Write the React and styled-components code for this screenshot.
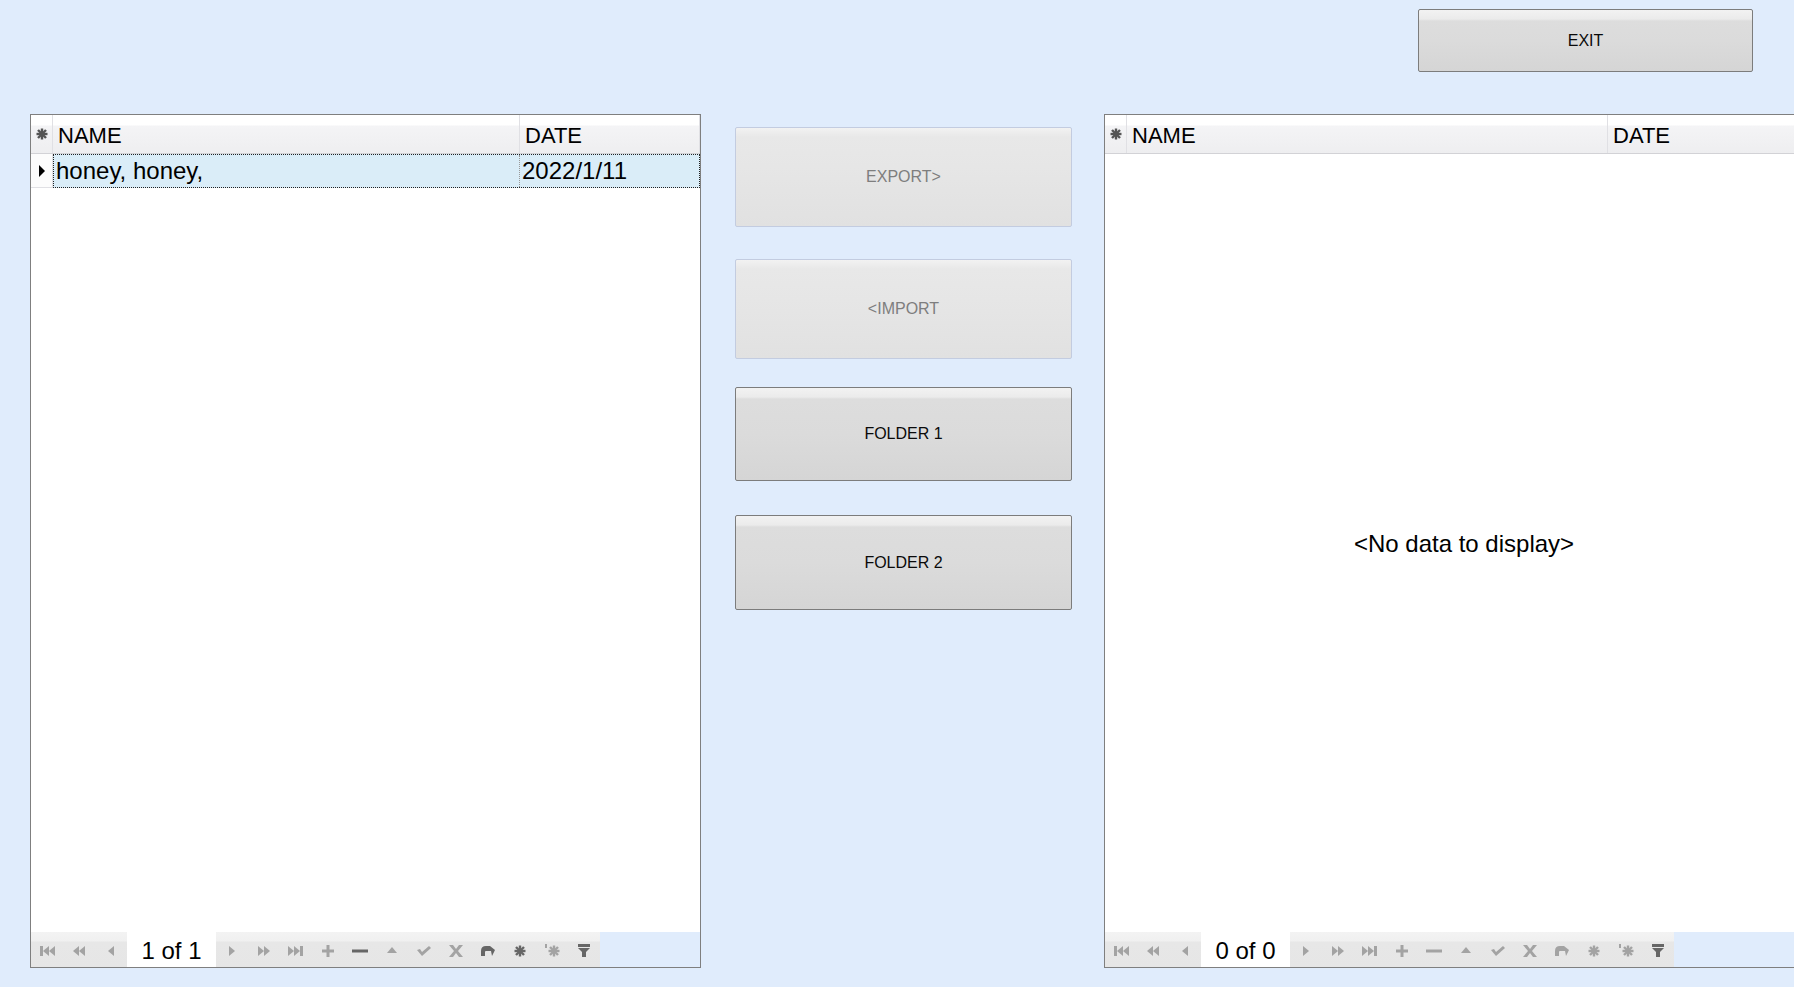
import React from 'react';
import styled, { createGlobalStyle } from 'styled-components';

const GlobalStyle = createGlobalStyle`
  html, body {
    margin: 0;
    padding: 0;
    background: #e0ecfc;
    overflow: hidden;
  }
  body {
    font-family: "Liberation Sans", Arial, sans-serif;
  }
`;

const Page = styled.div`
  width: 1794px;
  height: 987px;
  display: flex;
  flex-direction: column;
  overflow: hidden;
`;

const TopBar = styled.div`
  display: flex;
  justify-content: flex-end;
  padding: 9px 41px 0 0;
  margin-bottom: 42px;
`;

const Main = styled.div`
  display: flex;
  align-items: flex-start;
  padding-left: 30px;
`;

const ActionColumn = styled.div`
  display: flex;
  flex-direction: column;
  flex-shrink: 0;
  width: 337px;
  margin: 0 32px 0 34px;
  padding-top: 13px;
`;

const Button = styled.button`
  box-sizing: border-box;
  width: ${p => p.$w || 337}px;
  height: ${p => p.$h}px;
  margin-top: ${p => p.$mt || 0}px;
  border-radius: 2px;
  font-family: "Liberation Sans", Arial, sans-serif;
  font-size: 16px;
  padding: 0;
  cursor: default;
  border: 1px solid ${p => (p.disabled ? '#c3cce0' : '#7c7c7c')};
  color: ${p => (p.disabled ? '#7e7e7e' : '#0a0a0a')};
  background: ${p =>
    p.disabled
      ? 'linear-gradient(#f2f2f2 0, #e8e8e8 9px, #e6e6e6 40%, #e1e1e1 100%)'
      : 'linear-gradient(#f2f2f2 0, #ebebeb 9px, #dddddd 11px, #dbdbdb 50%, #d5d5d5 100%)'};
`;

const GridBox = styled.div`
  box-sizing: border-box;
  flex-shrink: 0;
  width: ${p => p.$w}px;
  height: 854px;
  border: 1px solid #7f7f7f;
  background: #fff;
  display: flex;
  flex-direction: column;
  font-size: 24px;
  color: #000;
`;

const HeaderRow = styled.div`
  display: flex;
  height: 38px;
  border-bottom: 1px solid #d2d2d6;
  background: linear-gradient(#ffffff 0, #ffffff 10px, #f4f4f6 11px, #eeeef0 100%);
  font-size: 22px;
`;

const HeaderCell = styled.div`
  box-sizing: border-box;
  width: ${p => (p.$w ? `${p.$w}px` : 'auto')};
  flex: ${p => (p.$w ? '0 0 auto' : '1')};
  border-right: 1px solid #e0e0e4;
  display: flex;
  align-items: center;
  justify-content: ${p => (p.$center ? 'center' : 'flex-start')};
  padding-left: ${p => (p.$center ? 0 : 5)}px;
  padding-top: ${p => (p.$center ? 0 : 4)}px;
  overflow: hidden;
  white-space: nowrap;
  color: ${p => (p.$center ? '#555' : '#000')};
`;

const DataRow = styled.div`
  display: flex;
  height: 34px;
`;

const Indicator = styled.div`
  box-sizing: border-box;
  width: ${p => p.$w}px;
  flex-shrink: 0;
  border-right: 1px solid #e0e0e4;
  border-bottom: 1px solid #e0e0e4;
  display: flex;
  align-items: center;
  justify-content: center;
  background: #fcfcfc;
`;

const FocusCells = styled.div`
  flex: 1;
  display: flex;
  border: 1px dotted #222;
  background: #daedf8;
`;

const Cell = styled.div`
  box-sizing: border-box;
  width: ${p => (p.$w ? `${p.$w}px` : 'auto')};
  flex: ${p => (p.$w ? '0 0 auto' : '1')};
  border-right: ${p => (p.$w ? '1px dotted #999' : 'none')};
  display: flex;
  align-items: center;
  padding-left: 2px;
  white-space: nowrap;
`;

const Body = styled.div`
  flex: 1;
  display: flex;
  flex-direction: column;
`;

const Empty = styled.div`
  flex: 1;
  display: flex;
  align-items: center;
  justify-content: center;
  padding-top: 2px;
`;

const Footer = styled.div`
  display: flex;
  height: 35px;
  background: #e0ecfc;
`;

const Navigator = styled.div`
  display: flex;
  height: 100%;
  background: linear-gradient(#f3f3f3 0, #f0f0f0 9px, #e7e7e7 10px, #e6e6e6 100%);
`;

const NavButton = styled.div`
  width: 32px;
  height: 100%;
  display: flex;
  align-items: center;
  justify-content: center;
  padding-top: 2px;
  box-sizing: border-box;
  color: ${p => (p.$dark ? '#666' : '#a3a3a3')};
`;

const PageText = styled.div`
  width: 89px;
  height: 100%;
  background: #fff;
  display: flex;
  align-items: center;
  justify-content: center;
  padding-top: 3px;
  box-sizing: border-box;
`;

const Icon = ({ children, w = 16, h = 12 }) => (
  <svg width={w} height={h} viewBox={`0 0 ${w} ${h}`} fill="currentColor">
    {children}
  </svg>
);

const Star = ({ size = 12, sw = 2 }) => (
  <svg width={size} height={size} viewBox="0 0 12 12" stroke="currentColor" strokeWidth={sw} fill="none">
    <line x1="6" y1="0.5" x2="6" y2="11.5" />
    <line x1="0.5" y1="6" x2="11.5" y2="6" />
    <line x1="2" y1="2" x2="10" y2="10" />
    <line x1="10" y1="2" x2="2" y2="10" />
  </svg>
);

const icons = {
  first: (
    <Icon>
      <rect x="1" y="1" width="3" height="10" />
      <polygon points="10,1 4,6 10,11" />
      <polygon points="16,1 10,6 16,11" />
    </Icon>
  ),
  prevPage: (
    <Icon>
      <polygon points="8,1 2,6 8,11" />
      <polygon points="14,1 8,6 14,11" />
    </Icon>
  ),
  prev: (
    <Icon>
      <polygon points="11,1 5,6 11,11" />
    </Icon>
  ),
  next: (
    <Icon>
      <polygon points="5,1 11,6 5,11" />
    </Icon>
  ),
  nextPage: (
    <Icon>
      <polygon points="2,1 8,6 2,11" />
      <polygon points="8,1 14,6 8,11" />
    </Icon>
  ),
  last: (
    <Icon>
      <polygon points="0,1 6,6 0,11" />
      <polygon points="6,1 12,6 6,11" />
      <rect x="12" y="1" width="3" height="10" />
    </Icon>
  ),
  append: (
    <Icon>
      <rect x="2" y="4.5" width="12" height="3" />
      <rect x="6.5" y="0" width="3" height="12" />
    </Icon>
  ),
  remove: (
    <Icon>
      <rect x="0" y="4.5" width="16" height="3" />
    </Icon>
  ),
  edit: (
    <Icon>
      <polygon points="8,2 13,8 3,8" />
    </Icon>
  ),
  endEdit: (
    <Icon>
      <polygon points="1,5 4,4 6,7 13,1 15,3 6,11" />
    </Icon>
  ),
  cancel: (
    <Icon>
      <polygon points="1,0 5,0 8,4 11,0 15,0 10,6 15,12 11,12 8,8 5,12 1,12 6,6" />
    </Icon>
  ),
  refresh: (
    <Icon>
      <path d="M1 11 V6 Q1 1 6 1 H10 L15 5 L12 11 L11 6 H6 Q5 6 5 7 V11 Z" />
    </Icon>
  ),
};

const Filter = () => (
  <Icon w={14} h={13}>
    <rect x="1" y="0" width="12" height="3" />
    <polygon points="1,4 13,4 9,8 5,8" />
    <rect x="5" y="8" width="4" height="5" />
  </Icon>
);

function Nav({ text, dark }) {
  const d = dark || {};
  return (
    <Navigator>
      <NavButton>{icons.first}</NavButton>
      <NavButton>{icons.prevPage}</NavButton>
      <NavButton>{icons.prev}</NavButton>
      <PageText>{text}</PageText>
      <NavButton>{icons.next}</NavButton>
      <NavButton>{icons.nextPage}</NavButton>
      <NavButton>{icons.last}</NavButton>
      <NavButton>{icons.append}</NavButton>
      <NavButton $dark={d.remove}>{icons.remove}</NavButton>
      <NavButton>{icons.edit}</NavButton>
      <NavButton>{icons.endEdit}</NavButton>
      <NavButton>{icons.cancel}</NavButton>
      <NavButton $dark={d.refresh}>{icons.refresh}</NavButton>
      <NavButton $dark={d.star}><Star sw={2.4} /></NavButton>
      <NavButton>
        <svg width="16" height="13" viewBox="0 0 16 13">
          <rect x="1" y="0" width="2" height="4" fill="currentColor" />
          <g transform="translate(4 1)"><Star sw={2.4} /></g>
        </svg>
      </NavButton>
      <NavButton $dark><Filter /></NavButton>
    </Navigator>
  );
}

function Grid({ width, indW, nameW, rows, navText, navDark }) {
  return (
    <GridBox $w={width}>
      <HeaderRow>
        <HeaderCell $w={indW} $center>
          <Star size={12} sw={2.4} />
        </HeaderCell>
        <HeaderCell $w={nameW}>NAME</HeaderCell>
        <HeaderCell>DATE</HeaderCell>
      </HeaderRow>
      <Body>
        {rows.map(r => (
          <DataRow key={r.name}>
            <Indicator $w={indW}>
              <svg width="6" height="12" viewBox="0 0 6 12"><polygon points="0,0 6,6 0,12" fill="#000" /></svg>
            </Indicator>
            <FocusCells>
              <Cell $w={nameW - 1}>{r.name}</Cell>
              <Cell>{r.date}</Cell>
            </FocusCells>
          </DataRow>
        ))}
        {rows.length === 0 && <Empty>&lt;No data to display&gt;</Empty>}
      </Body>
      <Footer>
        <Nav text={navText} dark={navDark} />
      </Footer>
    </GridBox>
  );
}

export default function App() {
  return (
    <Page>
      <GlobalStyle />
      <TopBar>
        <Button $w={335} $h={63}>EXIT</Button>
      </TopBar>
      <Main>
        <Grid
          width={671}
          indW={22}
          nameW={467}
          rows={[{ name: 'honey, honey,', date: '2022/1/11' }]}
          navText="1 of 1"
          navDark={{ remove: true, refresh: true, star: true }}
        />
        <ActionColumn>
          <Button $h={100} disabled>EXPORT&gt;</Button>
          <Button $h={100} $mt={32} disabled>&lt;IMPORT</Button>
          <Button $h={94} $mt={28}>FOLDER 1</Button>
          <Button $h={95} $mt={34}>FOLDER 2</Button>
        </ActionColumn>
        <Grid
          width={720}
          indW={22}
          nameW={481}
          rows={[]}
          navText="0 of 0"
        />
      </Main>
    </Page>
  );
}
